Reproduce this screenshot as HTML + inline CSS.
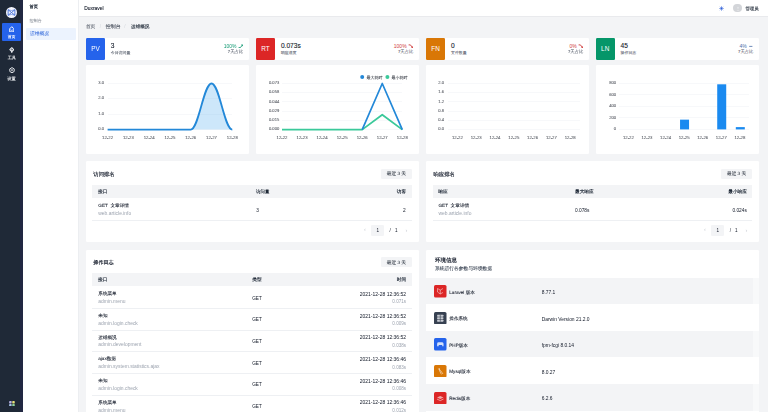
<!DOCTYPE html>
<html><head><meta charset="utf-8"><style>
html,body{margin:0;padding:0;width:768px;height:412px;overflow:hidden;background:#f3f4f6;}
body{position:relative;font-family:"Liberation Sans",sans-serif;}
.t{position:absolute;line-height:1;white-space:nowrap;}
.b{position:absolute;}
#wrap{position:absolute;left:0;top:0;width:768px;height:412px;overflow:hidden;filter:blur(0.3px);}
</style></head><body><div id="wrap">
<div class="b" style="left:0.00px;top:0.00px;width:23.30px;height:412.00px;background:#1f2937;"></div>
<div class="b" style="left:20.30px;top:0.00px;width:3.00px;height:412.00px;background:#212842;"></div>
<svg class="b" style="left:5.95px;top:6.95px" width="11" height="11" viewBox="0 0 44 44">
<circle cx="22" cy="22" r="22" fill="#f5f7fe"/>
<path d="M8.5 11 L8.5 33 L22 22 Z M35.5 11 L35.5 33 L22 22 Z" fill="none" stroke="#3565d6" stroke-width="3.4" stroke-linejoin="round"/>
<path d="M8.5 11 Q22 17.5 35.5 11 M8.5 33 Q22 26.5 35.5 33" stroke="#3565d6" stroke-width="2.2" fill="none"/>
</svg>
<div class="b" style="left:2.00px;top:23.30px;width:19.00px;height:17.70px;background:#2563eb;border-radius:1px;"></div>
<svg class="b" style="left:8.9px;top:25.7px" width="5.6" height="6.6" viewBox="0 0 20 24">
<path d="M2.5 10 L10 2.5 L17.5 10 L17.5 21.5 L2.5 21.5 Z" fill="none" stroke="#fff" stroke-width="3.6" stroke-linejoin="round"/>
<path d="M6.8 15 Q10 19 13.2 15" fill="none" stroke="#fff" stroke-width="2.8" stroke-linecap="round"/>
</svg>
<div class="t" style="left:-88.40px;width:200px;text-align:center;top:35px;font-size:3.9px;color:#ffffff;font-weight:700;text-rendering:geometricPrecision;">首页</div>
<svg class="b" style="left:8.9px;top:46.5px" width="5.6" height="6.4" viewBox="0 0 20 23">
<path d="M10 2.5 L17 9.5 L10 16.5 L3 9.5 Z" fill="none" stroke="#eef0f3" stroke-width="3.8" stroke-linejoin="round"/>
<path d="M10 9.5 L10 21" stroke="#eef0f3" stroke-width="3.4" stroke-linecap="round"/>
</svg>
<div class="t" style="left:-88.25px;width:200px;text-align:center;top:56px;font-size:4.1px;color:#eef0f3;font-weight:700;text-rendering:geometricPrecision;">工具</div>
<svg class="b" style="left:8.8px;top:67.2px" width="6" height="6.4" viewBox="0 0 22 23">
<path d="M11 2 L19 6.75 L19 16.25 L11 21 L3 16.25 L3 6.75 Z" fill="none" stroke="#eef0f3" stroke-width="3.4" stroke-linejoin="round"/>
<path d="M7.5 8 L14.5 15 M14.5 8 L7.5 15" stroke="#eef0f3" stroke-width="2.4"/>
</svg>
<div class="t" style="left:-88.50px;width:200px;text-align:center;top:77px;font-size:4.15px;color:#eef0f3;font-weight:700;text-rendering:geometricPrecision;">设置</div>
<svg class="b" style="left:8.7px;top:400.8px" width="5.9" height="5.6" viewBox="0 0 12 12">
<rect x="0" y="0" width="5.3" height="5.3" rx="1" fill="#b9b3e6"/>
<rect x="6.7" y="0" width="5.3" height="5.3" rx="1" fill="#e8e27a"/>
<rect x="0" y="6.7" width="5.3" height="5.3" rx="1" fill="#a9c3ec"/>
<rect x="6.7" y="6.7" width="5.3" height="5.3" rx="1" fill="#8fd39a"/>
</svg>
<div class="b" style="left:23.30px;top:0.00px;width:55.10px;height:412.00px;background:#fff;"></div>
<div class="b" style="left:78.00px;top:0.00px;width:0.80px;height:412.00px;background:#eceef1;"></div>
<div class="t" style="left:29.60px;top:5px;font-size:4.16px;color:#1f2937;font-weight:500;text-rendering:geometricPrecision;-webkit-text-stroke:0.2px;">首页</div>
<div class="t" style="left:29.60px;top:19px;font-size:4.04px;color:#8f959e;font-weight:400;text-rendering:geometricPrecision;-webkit-text-stroke:0.07px;">控制台</div>
<div class="b" style="left:25.80px;top:27.50px;width:50.10px;height:12.10px;background:#ecf3fe;border-radius:1px;"></div>
<div class="t" style="left:29.90px;top:33px;font-size:4.8px;color:#3a6fdc;font-weight:500;text-rendering:geometricPrecision;-webkit-text-stroke:0.05px;">运维概况</div>
<div class="b" style="left:79.00px;top:0.00px;width:689.00px;height:15.70px;background:#fff;"></div>
<div class="b" style="left:79.00px;top:15.70px;width:689.00px;height:1.20px;background:#e9eaed;"></div>
<div class="t" style="left:84.20px;top:7px;font-size:4.9px;color:#111827;font-weight:400;-webkit-text-stroke:0.1px;">Duxravel</div>
<svg class="b" style="left:719.2px;top:5.9px" width="5" height="5" viewBox="0 0 20 20">
<circle cx="10" cy="10" r="4.6" fill="#2f5fd8"/>
<g stroke="#2f5fd8" stroke-width="2.4" stroke-linecap="round" opacity="0.75">
<path d="M10 1.8v1.4M10 16.8v1.4M1.8 10h1.4M16.8 10h1.4M4.2 4.2l1 1M14.8 14.8l1 1M4.2 15.8l1-1M14.8 5.2l1-1"/></g>
</svg>
<div class="b" style="left:733.3px;top:3.7px;width:8.8px;height:8.8px;border-radius:50%;background:#d3d5d9"></div>
<svg class="b" style="left:735.7px;top:5.5px" width="4" height="5.2" viewBox="0 0 8 10"><circle cx="4" cy="3.2" r="1.9" fill="#e3e5e8"/><path d="M1 9.2 Q4 5.6 7 9.2Z" fill="#e3e5e8"/></svg>
<div class="t" style="left:745.40px;top:7px;font-size:4.42px;color:#1f2937;font-weight:700;text-rendering:geometricPrecision;">管理员</div>
<div class="t" style="left:85.90px;top:25px;font-size:4.7px;color:#4d5461;font-weight:400;text-rendering:geometricPrecision;-webkit-text-stroke:0.1px;">首页</div>
<div class="t" style="left:0.30px;width:200px;text-align:center;top:25px;font-size:4.6px;color:#d1d5db;font-weight:400;">/</div>
<div class="t" style="left:105.80px;top:26px;font-size:4.97px;color:#4d5461;font-weight:400;text-rendering:geometricPrecision;-webkit-text-stroke:0.1px;">控制台</div>
<div class="t" style="left:24.90px;width:200px;text-align:center;top:25px;font-size:4.6px;color:#d1d5db;font-weight:400;">/</div>
<div class="t" style="left:131.10px;top:25px;font-size:4.58px;color:#1f2937;font-weight:500;text-rendering:geometricPrecision;-webkit-text-stroke:0.14px;">运维概况</div>
<div class="b" style="left:85.80px;top:37.90px;width:163.30px;height:21.70px;background:#fff;border-radius:1.2px;"></div>
<div class="b" style="left:85.80px;top:37.90px;width:19.10px;height:21.70px;background:#2563eb;border-radius:1.2px;"></div>
<div class="t" style="left:-4.60px;width:200px;text-align:center;top:46px;font-size:6.4px;color:#fff;font-weight:400;">PV</div>
<div class="t" style="left:110.80px;top:43px;font-size:6.6px;color:#111827;font-weight:500;-webkit-text-stroke:0.1px;">3</div>
<div class="t" style="left:110.80px;top:51px;font-size:3.92px;color:#5f6673;font-weight:400;text-rendering:geometricPrecision;-webkit-text-stroke:0.07px;">今日访问量</div>
<div class="t" style="right:531.50px;top:44px;font-size:5.0px;color:#129a73;font-weight:400;">100%</div>
<svg class="b" style="left:237.90px;top:43.6px" width="5.5" height="4.5" viewBox="0 0 5.5 4.5"><path d="M0.6 3.6 L2.4 3.6 L4.4 1.0" fill="none" stroke="#129a73" stroke-width="0.9"/><path d="M3.0 0.6 L4.9 0.6 L4.9 2.5 Z" fill="#129a73"/></svg>
<div class="t" style="right:524.80px;top:50px;font-size:4.34px;color:#5f6673;font-weight:400;text-rendering:geometricPrecision;-webkit-text-stroke:0.07px;">7天占比</div>
<div class="b" style="left:255.90px;top:37.90px;width:163.30px;height:21.70px;background:#fff;border-radius:1.2px;"></div>
<div class="b" style="left:255.90px;top:37.90px;width:19.10px;height:21.70px;background:#dc2626;border-radius:1.2px;"></div>
<div class="t" style="left:165.50px;width:200px;text-align:center;top:46px;font-size:6.4px;color:#fff;font-weight:400;">RT</div>
<div class="t" style="left:280.90px;top:43px;font-size:6.6px;color:#111827;font-weight:500;-webkit-text-stroke:0.1px;">0.073s</div>
<div class="t" style="left:280.90px;top:51px;font-size:3.91px;color:#5f6673;font-weight:400;text-rendering:geometricPrecision;-webkit-text-stroke:0.07px;">响应速度</div>
<div class="t" style="right:361.40px;top:44px;font-size:5.0px;color:#cf3b3b;font-weight:400;">100%</div>
<svg class="b" style="left:408.00px;top:43.6px" width="5.5" height="4.5" viewBox="0 0 5.5 4.5"><path d="M0.6 0.9 L2.4 0.9 L4.4 3.4" fill="none" stroke="#cf3b3b" stroke-width="0.9"/><path d="M3.0 3.9 L4.9 3.9 L4.9 2.0 Z" fill="#cf3b3b"/></svg>
<div class="t" style="right:354.70px;top:50px;font-size:4.34px;color:#5f6673;font-weight:400;text-rendering:geometricPrecision;-webkit-text-stroke:0.07px;">7天占比</div>
<div class="b" style="left:426.00px;top:37.90px;width:163.20px;height:21.70px;background:#fff;border-radius:1.2px;"></div>
<div class="b" style="left:426.00px;top:37.90px;width:19.10px;height:21.70px;background:#d97706;border-radius:1.2px;"></div>
<div class="t" style="left:335.60px;width:200px;text-align:center;top:46px;font-size:6.4px;color:#fff;font-weight:400;">FN</div>
<div class="t" style="left:451.00px;top:43px;font-size:6.6px;color:#111827;font-weight:500;-webkit-text-stroke:0.1px;">0</div>
<div class="t" style="left:451.00px;top:51px;font-size:3.91px;color:#5f6673;font-weight:400;text-rendering:geometricPrecision;-webkit-text-stroke:0.07px;">文件数量</div>
<div class="t" style="right:191.40px;top:44px;font-size:5.0px;color:#cf3b3b;font-weight:400;">0%</div>
<svg class="b" style="left:578.00px;top:43.6px" width="5.5" height="4.5" viewBox="0 0 5.5 4.5"><path d="M0.6 0.9 L2.4 0.9 L4.4 3.4" fill="none" stroke="#cf3b3b" stroke-width="0.9"/><path d="M3.0 3.9 L4.9 3.9 L4.9 2.0 Z" fill="#cf3b3b"/></svg>
<div class="t" style="right:184.70px;top:50px;font-size:4.34px;color:#5f6673;font-weight:400;text-rendering:geometricPrecision;-webkit-text-stroke:0.07px;">7天占比</div>
<div class="b" style="left:595.60px;top:37.90px;width:163.70px;height:21.70px;background:#fff;border-radius:1.2px;"></div>
<div class="b" style="left:595.60px;top:37.90px;width:19.10px;height:21.70px;background:#059669;border-radius:1.2px;"></div>
<div class="t" style="left:505.20px;width:200px;text-align:center;top:46px;font-size:6.4px;color:#fff;font-weight:400;">LN</div>
<div class="t" style="left:620.60px;top:43px;font-size:6.6px;color:#111827;font-weight:500;-webkit-text-stroke:0.1px;">45</div>
<div class="t" style="left:620.60px;top:51px;font-size:3.91px;color:#5f6673;font-weight:400;text-rendering:geometricPrecision;-webkit-text-stroke:0.07px;">操作日志</div>
<div class="t" style="right:21.30px;top:44px;font-size:5.0px;color:#4a6ea8;font-weight:400;">4%</div>
<svg class="b" style="left:748.10px;top:43.6px" width="5.5" height="4.5" viewBox="0 0 5.5 4.5"><path d="M1.2 2.4 L4.4 2.4" fill="none" stroke="#4a6ea8" stroke-width="0.8"/></svg>
<div class="t" style="right:14.60px;top:50px;font-size:4.34px;color:#5f6673;font-weight:400;text-rendering:geometricPrecision;-webkit-text-stroke:0.07px;">7天占比</div>
<div class="b" style="left:85.80px;top:64.90px;width:163.30px;height:89.00px;background:#fff;border-radius:1.2px;"></div>
<div class="b" style="left:255.90px;top:64.90px;width:163.30px;height:89.00px;background:#fff;border-radius:1.2px;"></div>
<div class="b" style="left:426.00px;top:64.90px;width:163.20px;height:89.00px;background:#fff;border-radius:1.2px;"></div>
<div class="b" style="left:595.60px;top:64.90px;width:163.70px;height:89.00px;background:#fff;border-radius:1.2px;"></div>
<div class="b" style="left:107.60px;top:82.85px;width:124.70px;height:0.50px;background:#f7f8fa;"></div>
<div class="b" style="left:107.60px;top:98.22px;width:124.70px;height:0.50px;background:#f7f8fa;"></div>
<div class="b" style="left:107.60px;top:113.58px;width:124.70px;height:0.50px;background:#f7f8fa;"></div>
<div class="b" style="left:107.60px;top:129.35px;width:124.70px;height:0.50px;background:#f7f8fa;"></div>
<div class="t" style="right:664.00px;top:81px;font-size:4.1px;color:#5a5e66;font-weight:400;-webkit-text-stroke:0.08px;">3.0</div>
<div class="t" style="right:664.00px;top:96px;font-size:4.1px;color:#5a5e66;font-weight:400;-webkit-text-stroke:0.08px;">2.0</div>
<div class="t" style="right:664.00px;top:112px;font-size:4.1px;color:#5a5e66;font-weight:400;-webkit-text-stroke:0.08px;">1.0</div>
<div class="t" style="right:664.00px;top:127px;font-size:4.1px;color:#5a5e66;font-weight:400;-webkit-text-stroke:0.08px;">0.0</div>
<div class="t" style="left:7.60px;width:200px;text-align:center;top:136px;font-size:4.3px;color:#5a5e66;font-weight:400;-webkit-text-stroke:0.08px;">12-22</div>
<div class="t" style="left:28.38px;width:200px;text-align:center;top:136px;font-size:4.3px;color:#5a5e66;font-weight:400;-webkit-text-stroke:0.08px;">12-23</div>
<div class="t" style="left:49.17px;width:200px;text-align:center;top:136px;font-size:4.3px;color:#5a5e66;font-weight:400;-webkit-text-stroke:0.08px;">12-24</div>
<div class="t" style="left:69.95px;width:200px;text-align:center;top:136px;font-size:4.3px;color:#5a5e66;font-weight:400;-webkit-text-stroke:0.08px;">12-25</div>
<div class="t" style="left:90.73px;width:200px;text-align:center;top:136px;font-size:4.3px;color:#5a5e66;font-weight:400;-webkit-text-stroke:0.08px;">12-26</div>
<div class="t" style="left:111.52px;width:200px;text-align:center;top:136px;font-size:4.3px;color:#5a5e66;font-weight:400;-webkit-text-stroke:0.08px;">12-27</div>
<div class="t" style="left:132.30px;width:200px;text-align:center;top:136px;font-size:4.3px;color:#5a5e66;font-weight:400;-webkit-text-stroke:0.08px;">12-28</div>
<div class="b" style="left:282.00px;top:82.85px;width:120.30px;height:0.50px;background:#f7f8fa;"></div>
<div class="b" style="left:282.00px;top:92.07px;width:120.30px;height:0.50px;background:#f7f8fa;"></div>
<div class="b" style="left:282.00px;top:101.29px;width:120.30px;height:0.50px;background:#f7f8fa;"></div>
<div class="b" style="left:282.00px;top:110.51px;width:120.30px;height:0.50px;background:#f7f8fa;"></div>
<div class="b" style="left:282.00px;top:119.73px;width:120.30px;height:0.50px;background:#f7f8fa;"></div>
<div class="b" style="left:282.00px;top:129.35px;width:120.30px;height:0.50px;background:#f7f8fa;"></div>
<div class="t" style="right:488.80px;top:81px;font-size:4.1px;color:#5a5e66;font-weight:400;-webkit-text-stroke:0.08px;">0.073</div>
<div class="t" style="right:488.80px;top:90px;font-size:4.1px;color:#5a5e66;font-weight:400;-webkit-text-stroke:0.08px;">0.058</div>
<div class="t" style="right:488.80px;top:100px;font-size:4.1px;color:#5a5e66;font-weight:400;-webkit-text-stroke:0.08px;">0.044</div>
<div class="t" style="right:488.80px;top:109px;font-size:4.1px;color:#5a5e66;font-weight:400;-webkit-text-stroke:0.08px;">0.029</div>
<div class="t" style="right:488.80px;top:118px;font-size:4.1px;color:#5a5e66;font-weight:400;-webkit-text-stroke:0.08px;">0.015</div>
<div class="t" style="right:488.80px;top:127px;font-size:4.1px;color:#5a5e66;font-weight:400;-webkit-text-stroke:0.08px;">0.000</div>
<div class="t" style="left:182.00px;width:200px;text-align:center;top:136px;font-size:4.3px;color:#5a5e66;font-weight:400;-webkit-text-stroke:0.08px;">12-22</div>
<div class="t" style="left:202.05px;width:200px;text-align:center;top:136px;font-size:4.3px;color:#5a5e66;font-weight:400;-webkit-text-stroke:0.08px;">12-23</div>
<div class="t" style="left:222.10px;width:200px;text-align:center;top:136px;font-size:4.3px;color:#5a5e66;font-weight:400;-webkit-text-stroke:0.08px;">12-24</div>
<div class="t" style="left:242.15px;width:200px;text-align:center;top:136px;font-size:4.3px;color:#5a5e66;font-weight:400;-webkit-text-stroke:0.08px;">12-25</div>
<div class="t" style="left:262.20px;width:200px;text-align:center;top:136px;font-size:4.3px;color:#5a5e66;font-weight:400;-webkit-text-stroke:0.08px;">12-26</div>
<div class="t" style="left:282.25px;width:200px;text-align:center;top:136px;font-size:4.3px;color:#5a5e66;font-weight:400;-webkit-text-stroke:0.08px;">12-27</div>
<div class="t" style="left:302.30px;width:200px;text-align:center;top:136px;font-size:4.3px;color:#5a5e66;font-weight:400;-webkit-text-stroke:0.08px;">12-28</div>
<div class="b" style="left:448.00px;top:82.85px;width:131.60px;height:0.50px;background:#f7f8fa;"></div>
<div class="b" style="left:448.00px;top:92.07px;width:131.60px;height:0.50px;background:#f7f8fa;"></div>
<div class="b" style="left:448.00px;top:101.29px;width:131.60px;height:0.50px;background:#f7f8fa;"></div>
<div class="b" style="left:448.00px;top:110.51px;width:131.60px;height:0.50px;background:#f7f8fa;"></div>
<div class="b" style="left:448.00px;top:119.73px;width:131.60px;height:0.50px;background:#f7f8fa;"></div>
<div class="b" style="left:448.00px;top:129.35px;width:131.60px;height:0.50px;background:#f7f8fa;"></div>
<div class="t" style="right:324.00px;top:81px;font-size:4.1px;color:#5a5e66;font-weight:400;-webkit-text-stroke:0.08px;">2.0</div>
<div class="t" style="right:324.00px;top:90px;font-size:4.1px;color:#5a5e66;font-weight:400;-webkit-text-stroke:0.08px;">1.6</div>
<div class="t" style="right:324.00px;top:100px;font-size:4.1px;color:#5a5e66;font-weight:400;-webkit-text-stroke:0.08px;">1.2</div>
<div class="t" style="right:324.00px;top:109px;font-size:4.1px;color:#5a5e66;font-weight:400;-webkit-text-stroke:0.08px;">0.8</div>
<div class="t" style="right:324.00px;top:118px;font-size:4.1px;color:#5a5e66;font-weight:400;-webkit-text-stroke:0.08px;">0.4</div>
<div class="t" style="right:324.00px;top:127px;font-size:4.1px;color:#5a5e66;font-weight:400;-webkit-text-stroke:0.08px;">0.0</div>
<div class="t" style="left:357.40px;width:200px;text-align:center;top:136px;font-size:4.3px;color:#5a5e66;font-weight:400;-webkit-text-stroke:0.08px;">12-22</div>
<div class="t" style="left:376.20px;width:200px;text-align:center;top:136px;font-size:4.3px;color:#5a5e66;font-weight:400;-webkit-text-stroke:0.08px;">12-23</div>
<div class="t" style="left:395.00px;width:200px;text-align:center;top:136px;font-size:4.3px;color:#5a5e66;font-weight:400;-webkit-text-stroke:0.08px;">12-24</div>
<div class="t" style="left:413.80px;width:200px;text-align:center;top:136px;font-size:4.3px;color:#5a5e66;font-weight:400;-webkit-text-stroke:0.08px;">12-25</div>
<div class="t" style="left:432.60px;width:200px;text-align:center;top:136px;font-size:4.3px;color:#5a5e66;font-weight:400;-webkit-text-stroke:0.08px;">12-26</div>
<div class="t" style="left:451.40px;width:200px;text-align:center;top:136px;font-size:4.3px;color:#5a5e66;font-weight:400;-webkit-text-stroke:0.08px;">12-27</div>
<div class="t" style="left:470.20px;width:200px;text-align:center;top:136px;font-size:4.3px;color:#5a5e66;font-weight:400;-webkit-text-stroke:0.08px;">12-28</div>
<div class="b" style="left:619.10px;top:82.85px;width:130.10px;height:0.50px;background:#f7f8fa;"></div>
<div class="b" style="left:619.10px;top:94.38px;width:130.10px;height:0.50px;background:#f7f8fa;"></div>
<div class="b" style="left:619.10px;top:105.90px;width:130.10px;height:0.50px;background:#f7f8fa;"></div>
<div class="b" style="left:619.10px;top:117.42px;width:130.10px;height:0.50px;background:#f7f8fa;"></div>
<div class="b" style="left:619.10px;top:129.35px;width:130.10px;height:0.50px;background:#f7f8fa;"></div>
<div class="t" style="right:152.00px;top:81px;font-size:4.1px;color:#5a5e66;font-weight:400;-webkit-text-stroke:0.08px;">800</div>
<div class="t" style="right:152.00px;top:93px;font-size:4.1px;color:#5a5e66;font-weight:400;-webkit-text-stroke:0.08px;">600</div>
<div class="t" style="right:152.00px;top:104px;font-size:4.1px;color:#5a5e66;font-weight:400;-webkit-text-stroke:0.08px;">400</div>
<div class="t" style="right:152.00px;top:116px;font-size:4.1px;color:#5a5e66;font-weight:400;-webkit-text-stroke:0.08px;">200</div>
<div class="t" style="right:152.00px;top:127px;font-size:4.1px;color:#5a5e66;font-weight:400;-webkit-text-stroke:0.08px;">0</div>
<div class="t" style="left:528.39px;width:200px;text-align:center;top:136px;font-size:4.3px;color:#5a5e66;font-weight:400;-webkit-text-stroke:0.08px;">12-22</div>
<div class="t" style="left:546.98px;width:200px;text-align:center;top:136px;font-size:4.3px;color:#5a5e66;font-weight:400;-webkit-text-stroke:0.08px;">12-23</div>
<div class="t" style="left:565.56px;width:200px;text-align:center;top:136px;font-size:4.3px;color:#5a5e66;font-weight:400;-webkit-text-stroke:0.08px;">12-24</div>
<div class="t" style="left:584.15px;width:200px;text-align:center;top:136px;font-size:4.3px;color:#5a5e66;font-weight:400;-webkit-text-stroke:0.08px;">12-25</div>
<div class="t" style="left:602.74px;width:200px;text-align:center;top:136px;font-size:4.3px;color:#5a5e66;font-weight:400;-webkit-text-stroke:0.08px;">12-26</div>
<div class="t" style="left:621.32px;width:200px;text-align:center;top:136px;font-size:4.3px;color:#5a5e66;font-weight:400;-webkit-text-stroke:0.08px;">12-27</div>
<div class="t" style="left:639.91px;width:200px;text-align:center;top:136px;font-size:4.3px;color:#5a5e66;font-weight:400;-webkit-text-stroke:0.08px;">12-28</div>
<svg class="b" style="left:0;top:0" width="768" height="412">
<path d="M107.60 129.6 L190.73 129.6 C198.73 129.6 203.52 83.5 211.52 83.5 C219.52 83.5 224.30 129.6 232.30 129.6 Z" fill="rgba(90,176,238,0.30)" stroke="none"/>
<path d="M107.60 129.6 L190.73 129.6 C198.73 129.6 203.52 83.5 211.52 83.5 C219.52 83.5 224.30 129.6 232.30 129.6" fill="none" stroke="#2388d8" stroke-width="1.8"/>

<path d="M282.00 129.6 L362.20 129.6 L382.25 114.76 L402.30 129.6" fill="none" stroke="#3bc99a" stroke-width="1.8" stroke-linejoin="round"/>
<path d="M362.20 129.6 L382.25 83.5 L402.30 129.6" fill="none" stroke="#2388d8" stroke-width="1.7" stroke-linejoin="round"/>
<circle cx="362.2" cy="77.0" r="2.0" fill="#2388d8"/>
<circle cx="387.4" cy="77.0" r="2.0" fill="#3bc99a"/>

<rect x="680.05" y="119.65" width="9.0" height="9.75" fill="#1a8af0"/>
<rect x="717.22" y="84.30" width="9.0" height="45.10" fill="#1a8af0"/>
<rect x="735.81" y="127.11" width="9.0" height="2.30" fill="#1a8af0"/>
</svg>
<div class="t" style="left:366.40px;top:76px;font-size:4.0px;color:#3f444c;font-weight:400;text-rendering:geometricPrecision;-webkit-text-stroke:0.07px;">最大耗时</div>
<div class="t" style="left:391.40px;top:76px;font-size:4.0px;color:#3f444c;font-weight:400;text-rendering:geometricPrecision;-webkit-text-stroke:0.07px;">最小耗时</div>
<div class="b" style="left:85.80px;top:160.90px;width:333.40px;height:81.30px;background:#fff;border-radius:1.2px;"></div>
<div class="t" style="left:93.30px;top:173px;font-size:5.33px;color:#111827;font-weight:500;text-rendering:geometricPrecision;-webkit-text-stroke:0.15px;">访问排名</div>
<div class="b" style="left:381.20px;top:168.70px;width:30.50px;height:10.20px;background:#f3f4f6;border-radius:1.2px;"></div>
<div class="t" style="left:296.45px;width:200px;text-align:center;top:172px;font-size:4.68px;color:#3f4651;font-weight:400;text-rendering:geometricPrecision;-webkit-text-stroke:0.08px;">最近 3 天</div>
<div class="b" style="left:92.40px;top:185.30px;width:319.30px;height:13.20px;background:#f3f4f6;"></div>
<div class="t" style="left:98.00px;top:190px;font-size:4.7px;color:#1f2937;font-weight:700;text-rendering:geometricPrecision;">接口</div>
<div class="t" style="left:256.00px;top:190px;font-size:4.47px;color:#1f2937;font-weight:700;text-rendering:geometricPrecision;">访问量</div>
<div class="t" style="right:361.90px;top:190px;font-size:4.7px;color:#1f2937;font-weight:700;text-rendering:geometricPrecision;">访客</div>
<div class="t" style="left:256.30px;top:209px;font-size:4.8px;color:#111827;font-weight:400;">3</div>
<div class="t" style="right:362.30px;top:209px;font-size:4.8px;color:#111827;font-weight:400;">2</div>
<div class="t" style="left:98.30px;top:204px;font-size:4.65px;color:#111827;font-weight:500;text-rendering:geometricPrecision;-webkit-text-stroke:0.07px;">GET&nbsp; 文章详情</div>
<div class="t" style="left:98.30px;top:212px;font-size:4.94px;color:#9ca3af;font-weight:400;">web.article.info</div>
<div class="b" style="left:92.40px;top:219.80px;width:319.30px;height:0.50px;background:#eef0f3;"></div>
<div class="b" style="left:371.20px;top:224.80px;width:13.20px;height:10.90px;background:#f3f4f6;border-radius:1.2px;"></div>
<div class="t" style="left:264.80px;width:200px;text-align:center;top:227px;font-size:5.5px;color:#c9cdd3;font-weight:400;">‹</div>
<div class="t" style="left:277.80px;width:200px;text-align:center;top:229px;font-size:4.6px;color:#111827;font-weight:400;">1</div>
<div class="t" style="left:290.20px;width:200px;text-align:center;top:229px;font-size:4.6px;color:#111827;font-weight:400;">/</div>
<div class="t" style="left:296.30px;width:200px;text-align:center;top:229px;font-size:4.6px;color:#111827;font-weight:400;">1</div>
<div class="t" style="left:306.40px;width:200px;text-align:center;top:228px;font-size:5.5px;color:#c9cdd3;font-weight:400;">›</div>
<div class="b" style="left:426.00px;top:160.90px;width:333.30px;height:81.30px;background:#fff;border-radius:1.2px;"></div>
<div class="t" style="left:433.50px;top:173px;font-size:5.33px;color:#111827;font-weight:500;text-rendering:geometricPrecision;-webkit-text-stroke:0.15px;">响应排名</div>
<div class="b" style="left:721.30px;top:168.70px;width:30.50px;height:10.20px;background:#f3f4f6;border-radius:1.2px;"></div>
<div class="t" style="left:636.55px;width:200px;text-align:center;top:172px;font-size:4.68px;color:#3f4651;font-weight:400;text-rendering:geometricPrecision;-webkit-text-stroke:0.08px;">最近 3 天</div>
<div class="b" style="left:432.60px;top:185.30px;width:319.20px;height:13.20px;background:#f3f4f6;"></div>
<div class="t" style="left:438.20px;top:190px;font-size:4.7px;color:#1f2937;font-weight:700;text-rendering:geometricPrecision;">响应</div>
<div class="t" style="left:575.00px;top:190px;font-size:4.65px;color:#1f2937;font-weight:700;text-rendering:geometricPrecision;">最大响应</div>
<div class="t" style="right:21.20px;top:190px;font-size:4.65px;color:#1f2937;font-weight:700;text-rendering:geometricPrecision;">最小响应</div>
<div class="t" style="left:575.00px;top:209px;font-size:4.8px;color:#111827;font-weight:400;">0.078s</div>
<div class="t" style="right:21.20px;top:209px;font-size:4.8px;color:#111827;font-weight:400;">0.024s</div>
<div class="t" style="left:438.50px;top:204px;font-size:4.65px;color:#111827;font-weight:500;text-rendering:geometricPrecision;-webkit-text-stroke:0.07px;">GET&nbsp; 文章详情</div>
<div class="t" style="left:438.50px;top:212px;font-size:4.94px;color:#9ca3af;font-weight:400;">web.article.info</div>
<div class="b" style="left:432.60px;top:219.80px;width:319.20px;height:0.50px;background:#eef0f3;"></div>
<div class="b" style="left:711.30px;top:224.80px;width:13.20px;height:10.90px;background:#f3f4f6;border-radius:1.2px;"></div>
<div class="t" style="left:604.90px;width:200px;text-align:center;top:227px;font-size:5.5px;color:#c9cdd3;font-weight:400;">‹</div>
<div class="t" style="left:617.90px;width:200px;text-align:center;top:229px;font-size:4.6px;color:#111827;font-weight:400;">1</div>
<div class="t" style="left:630.30px;width:200px;text-align:center;top:229px;font-size:4.6px;color:#111827;font-weight:400;">/</div>
<div class="t" style="left:636.40px;width:200px;text-align:center;top:229px;font-size:4.6px;color:#111827;font-weight:400;">1</div>
<div class="t" style="left:646.50px;width:200px;text-align:center;top:228px;font-size:5.5px;color:#c9cdd3;font-weight:400;">›</div>
<div class="b" style="left:85.80px;top:249.50px;width:333.40px;height:180.50px;background:#fff;border-radius:1.2px;"></div>
<div class="t" style="left:93.30px;top:261px;font-size:5.08px;color:#111827;font-weight:500;text-rendering:geometricPrecision;-webkit-text-stroke:0.15px;">操作日志</div>
<div class="b" style="left:381.20px;top:257.25px;width:30.50px;height:10.20px;background:#f3f4f6;border-radius:1.2px;"></div>
<div class="t" style="left:296.45px;width:200px;text-align:center;top:261px;font-size:4.68px;color:#3f4651;font-weight:400;text-rendering:geometricPrecision;-webkit-text-stroke:0.08px;">最近 3 天</div>
<div class="b" style="left:92.40px;top:273.30px;width:319.30px;height:13.20px;background:#f3f4f6;"></div>
<div class="t" style="left:98.00px;top:278px;font-size:4.7px;color:#1f2937;font-weight:700;text-rendering:geometricPrecision;">接口</div>
<div class="t" style="left:252.20px;top:278px;font-size:4.7px;color:#1f2937;font-weight:700;text-rendering:geometricPrecision;">类型</div>
<div class="t" style="right:361.90px;top:278px;font-size:4.7px;color:#1f2937;font-weight:700;text-rendering:geometricPrecision;">时间</div>
<div class="t" style="left:98.30px;top:292px;font-size:4.6px;color:#111827;font-weight:500;text-rendering:geometricPrecision;-webkit-text-stroke:0.07px;">系统菜单</div>
<div class="t" style="left:98.30px;top:300px;font-size:4.95px;color:#9ca3af;font-weight:400;">admin.menu</div>
<div class="t" style="left:252.20px;top:297px;font-size:4.7px;color:#111827;font-weight:400;">GET</div>
<div class="t" style="right:361.90px;top:292px;font-size:5.0px;color:#111827;font-weight:400;">2021-12-28 12:36:52</div>
<div class="t" style="right:361.90px;top:300px;font-size:4.6px;color:#9ca3af;font-weight:400;">0.071s</div>
<div class="b" style="left:92.40px;top:307.97px;width:319.30px;height:0.50px;background:#eef0f3;"></div>
<div class="t" style="left:98.30px;top:314px;font-size:4.6px;color:#111827;font-weight:500;text-rendering:geometricPrecision;-webkit-text-stroke:0.07px;">未知</div>
<div class="t" style="left:98.30px;top:322px;font-size:4.95px;color:#9ca3af;font-weight:400;">admin.login.check</div>
<div class="t" style="left:252.20px;top:318px;font-size:4.7px;color:#111827;font-weight:400;">GET</div>
<div class="t" style="right:361.90px;top:314px;font-size:5.0px;color:#111827;font-weight:400;">2021-12-28 12:36:52</div>
<div class="t" style="right:361.90px;top:322px;font-size:4.6px;color:#9ca3af;font-weight:400;">0.009s</div>
<div class="b" style="left:92.40px;top:329.69px;width:319.30px;height:0.50px;background:#eef0f3;"></div>
<div class="t" style="left:98.30px;top:336px;font-size:4.6px;color:#111827;font-weight:500;text-rendering:geometricPrecision;-webkit-text-stroke:0.07px;">运维概况</div>
<div class="t" style="left:98.30px;top:343px;font-size:4.95px;color:#9ca3af;font-weight:400;">admin.development</div>
<div class="t" style="left:252.20px;top:340px;font-size:4.7px;color:#111827;font-weight:400;">GET</div>
<div class="t" style="right:361.90px;top:335px;font-size:5.0px;color:#111827;font-weight:400;">2021-12-28 12:36:52</div>
<div class="t" style="right:361.90px;top:344px;font-size:4.6px;color:#9ca3af;font-weight:400;">0.038s</div>
<div class="b" style="left:92.40px;top:351.41px;width:319.30px;height:0.50px;background:#eef0f3;"></div>
<div class="t" style="left:98.30px;top:357px;font-size:4.6px;color:#111827;font-weight:500;text-rendering:geometricPrecision;-webkit-text-stroke:0.07px;">ajax数据</div>
<div class="t" style="left:98.30px;top:365px;font-size:4.95px;color:#9ca3af;font-weight:400;">admin.system.statistics.ajax</div>
<div class="t" style="left:252.20px;top:362px;font-size:4.7px;color:#111827;font-weight:400;">GET</div>
<div class="t" style="right:361.90px;top:357px;font-size:5.0px;color:#111827;font-weight:400;">2021-12-28 12:36:46</div>
<div class="t" style="right:361.90px;top:366px;font-size:4.6px;color:#9ca3af;font-weight:400;">0.083s</div>
<div class="b" style="left:92.40px;top:373.13px;width:319.30px;height:0.50px;background:#eef0f3;"></div>
<div class="t" style="left:98.30px;top:379px;font-size:4.6px;color:#111827;font-weight:500;text-rendering:geometricPrecision;-webkit-text-stroke:0.07px;">未知</div>
<div class="t" style="left:98.30px;top:387px;font-size:4.95px;color:#9ca3af;font-weight:400;">admin.login.check</div>
<div class="t" style="left:252.20px;top:383px;font-size:4.7px;color:#111827;font-weight:400;">GET</div>
<div class="t" style="right:361.90px;top:379px;font-size:5.0px;color:#111827;font-weight:400;">2021-12-28 12:36:46</div>
<div class="t" style="right:361.90px;top:387px;font-size:4.6px;color:#9ca3af;font-weight:400;">0.008s</div>
<div class="b" style="left:92.40px;top:394.85px;width:319.30px;height:0.50px;background:#eef0f3;"></div>
<div class="t" style="left:98.30px;top:401px;font-size:4.6px;color:#111827;font-weight:500;text-rendering:geometricPrecision;-webkit-text-stroke:0.07px;">系统菜单</div>
<div class="t" style="left:98.30px;top:409px;font-size:4.95px;color:#9ca3af;font-weight:400;">admin.menu</div>
<div class="t" style="left:252.20px;top:405px;font-size:4.7px;color:#111827;font-weight:400;">GET</div>
<div class="t" style="right:361.90px;top:400px;font-size:5.0px;color:#111827;font-weight:400;">2021-12-28 12:36:46</div>
<div class="t" style="right:361.90px;top:409px;font-size:4.6px;color:#9ca3af;font-weight:400;">0.012s</div>
<div class="b" style="left:92.40px;top:416.57px;width:319.30px;height:0.50px;background:#eef0f3;"></div>
<div class="b" style="left:426.00px;top:249.50px;width:333.30px;height:180.50px;background:#fff;border-radius:1.2px;"></div>
<div class="t" style="left:434.90px;top:259px;font-size:5.55px;color:#111827;font-weight:700;text-rendering:geometricPrecision;">环境信息</div>
<div class="t" style="left:434.90px;top:268px;font-size:4.77px;color:#374151;font-weight:400;text-rendering:geometricPrecision;-webkit-text-stroke:0.07px;">系统运行各参数与环境数据</div>
<div class="b" style="left:426.00px;top:277.60px;width:326.50px;height:26.60px;background:#f3f4f6;"></div>
<div class="b" style="left:752.50px;top:277.60px;width:6.80px;height:26.60px;background:#f8f9fa;"></div>
<svg class="b" style="left:434.3px;top:285.15px" width="12.5" height="12.5" viewBox="0 0 16 16"><rect width="16" height="16" rx="2" fill="#dc2626"/><path d="M4.5 4.5 L8 6.5 L8 11.5 M8 6.5 L11.5 4.5 M4.5 4.5 L4.5 9 L8 11.5 L11.5 9.5" fill="none" stroke="rgba(255,255,255,0.5)" stroke-width="1.2"/></svg>
<div class="t" style="left:449.30px;top:291px;font-size:4.6px;color:#111827;font-weight:500;text-rendering:geometricPrecision;-webkit-text-stroke:0.07px;">Laravel 版本</div>
<div class="t" style="left:541.70px;top:291px;font-size:4.9px;color:#111827;font-weight:400;">8.77.1</div>
<svg class="b" style="left:434.3px;top:311.75px" width="12.5" height="12.5" viewBox="0 0 16 16"><rect width="16" height="16" rx="2" fill="#374151"/><rect x="4" y="3.6" width="8" height="2.4" rx="0.5" fill="#c9ccd3"/><rect x="4" y="6.8" width="8" height="2.4" rx="0.5" fill="#c9ccd3"/><rect x="4" y="10" width="8" height="2.4" rx="0.5" fill="#c9ccd3"/><path d="M8 3.5 V12.5" stroke="#374151" stroke-width="0.8"/></svg>
<div class="t" style="left:449.30px;top:317px;font-size:4.6px;color:#111827;font-weight:500;text-rendering:geometricPrecision;-webkit-text-stroke:0.07px;">操作系统</div>
<div class="t" style="left:541.70px;top:318px;font-size:4.9px;color:#111827;font-weight:400;">Darwin Version 21.2.0</div>
<div class="b" style="left:426.00px;top:330.80px;width:326.50px;height:26.60px;background:#f3f4f6;"></div>
<div class="b" style="left:752.50px;top:330.80px;width:6.80px;height:26.60px;background:#f8f9fa;"></div>
<svg class="b" style="left:434.3px;top:338.35px" width="12.5" height="12.5" viewBox="0 0 16 16"><rect width="16" height="16" rx="2" fill="#2563eb"/><path d="M4 10.5 L4 7.2 Q4 5.5 6 5.5 L10.5 5.5 Q12.2 5.5 12.2 7.5 L12.2 10.5 L10.5 10.5 L10.5 9 L6 9 L6 10.5 Z" fill="rgba(255,255,255,0.8)"/></svg>
<div class="t" style="left:449.30px;top:344px;font-size:4.6px;color:#111827;font-weight:500;text-rendering:geometricPrecision;-webkit-text-stroke:0.07px;">PHP版本</div>
<div class="t" style="left:541.70px;top:344px;font-size:4.9px;color:#111827;font-weight:400;">fpm-fcgi 8.0.14</div>
<svg class="b" style="left:434.3px;top:364.95px" width="12.5" height="12.5" viewBox="0 0 16 16"><rect width="16" height="16" rx="2" fill="#d97706"/><path d="M5 4.5 Q9 7 11.5 11.5 M7 4 Q6.5 8 9.5 12" fill="none" stroke="rgba(255,255,255,0.6)" stroke-width="1.1"/></svg>
<div class="t" style="left:449.30px;top:370px;font-size:4.6px;color:#111827;font-weight:500;text-rendering:geometricPrecision;-webkit-text-stroke:0.07px;">Mysql版本</div>
<div class="t" style="left:541.70px;top:371px;font-size:4.9px;color:#111827;font-weight:400;">8.0.27</div>
<div class="b" style="left:426.00px;top:384.00px;width:326.50px;height:26.60px;background:#f3f4f6;"></div>
<div class="b" style="left:752.50px;top:384.00px;width:6.80px;height:26.60px;background:#f8f9fa;"></div>
<svg class="b" style="left:434.3px;top:391.55px" width="12.5" height="12.5" viewBox="0 0 16 16"><rect width="16" height="16" rx="2" fill="#dc2626"/><path d="M3.8 7 L8 5 L12.2 7 L8 9 Z" fill="rgba(255,255,255,0.6)"/><path d="M3.8 9 L8 11 L12.2 9" fill="none" stroke="rgba(255,255,255,0.6)" stroke-width="1.1"/></svg>
<div class="t" style="left:449.30px;top:397px;font-size:4.6px;color:#111827;font-weight:500;text-rendering:geometricPrecision;-webkit-text-stroke:0.07px;">Redis版本</div>
<div class="t" style="left:541.70px;top:397px;font-size:4.9px;color:#111827;font-weight:400;">6.2.6</div>
</div></body></html>
